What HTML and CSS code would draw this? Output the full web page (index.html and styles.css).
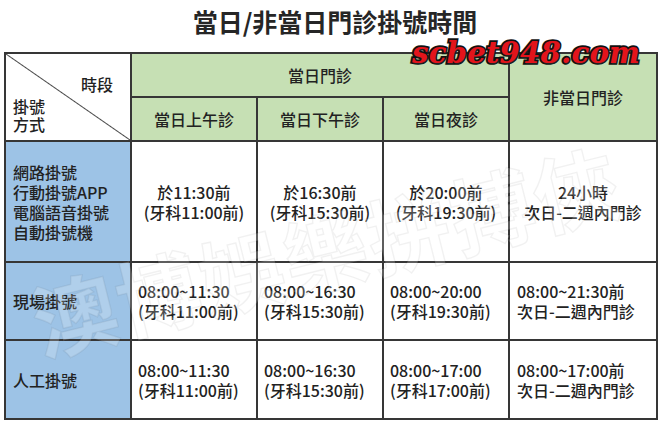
FILE: index.html
```html
<!DOCTYPE html>
<html lang="zh-Hant">
<head>
<meta charset="utf-8">
<title>當日/非當日門診掛號時間</title>
<link rel="stylesheet" href="styles.css">
</head>
<body>
<div class="page">
  <h1 class="title">當日/非當日門診掛號時間</h1>
  <div class="sheet">
    <div class="grid">
      <div class="cell corner">
        <div class="corner-top">時段</div>
        <div class="corner-bottom">掛號<br>方式</div>
      </div>
      <div class="cell head span3">當日門診</div>
      <div class="cell head span-rows">非當日門診</div>
      <div class="cell head">當日上午診</div>
      <div class="cell head">當日下午診</div>
      <div class="cell head">當日夜診</div>

      <div class="cell side">網路掛號<br>行動掛號APP<br>電腦語音掛號<br>自動掛號機</div>
      <div class="cell data center">於11:30前<br>(牙科11:00前)</div>
      <div class="cell data center">於16:30前<br>(牙科15:30前)</div>
      <div class="cell data center">於20:00前<br>(牙科19:30前)</div>
      <div class="cell data center">24小時<br>次日-二週內門診</div>

      <div class="cell side">現場掛號</div>
      <div class="cell data">08:00~11:30<br>(牙科11:00前)</div>
      <div class="cell data">08:00~16:30<br>(牙科15:30前)</div>
      <div class="cell data">08:00~20:00<br>(牙科19:30前)</div>
      <div class="cell data wide">08:00~21:30前<br>次日-二週內門診</div>

      <div class="cell side">人工掛號</div>
      <div class="cell data">08:00~11:30<br>(牙科11:00前)</div>
      <div class="cell data">08:00~16:30<br>(牙科15:30前)</div>
      <div class="cell data">08:00~17:00<br>(牙科17:00前)</div>
      <div class="cell data wide">08:00~17:00前<br>次日-二週內門診</div>
    </div>
    <div class="watermark" aria-hidden="true">澳博娛樂拼搏俠</div>
  </div>
  <div class="logo">scbet948.com</div>
</div>
</body>
</html>
```

FILE: styles.css
```css
html, body {
  margin: 0;
  padding: 0;
  background: #ffffff;
}

.page {
  position: relative;
  width: 663px;
  height: 425px;
  overflow: hidden;
  font-family: "Noto Sans CJK TC", "Noto Sans", sans-serif;
  color: #222222;
}

.title {
  margin: 0;
  padding-left: 7px;
  height: 42px;
  line-height: 42px;
  font-size: 25px;
  font-weight: 700;
  text-align: center;
  color: #262626;
}

.sheet {
  position: relative;
  margin: 10px 4px 0 4px;
  width: 654px;
}

.grid {
  display: grid;
  grid-template-columns: 124px 124px 124px 124px 146px;
  grid-template-rows: 42px 42px 119px 76px 77px;
  gap: 2px;
  padding: 2px;
  background: #363636;
}

.cell {
  background: #ffffff;
  font-size: 16px;
  font-weight: 500;
  line-height: 20px;
  display: flex;
  align-items: center;
}

.head {
  background: #c6e0b4;
  justify-content: center;
}

.span3 {
  grid-column: span 3;
}

.span-rows {
  grid-column: 5;
  grid-row: 1 / span 2;
}

.corner {
  grid-column: 1;
  grid-row: 1 / span 2;
  flex-direction: column;
  align-items: stretch;
  background: linear-gradient(to top right, #ffffff calc(50% - 1px), #4a4a4a 50%, #ffffff calc(50% + 1px));
  line-height: 18px;
}

.corner-top {
  padding-top: 21px;
  padding-right: 17px;
  text-align: right;
}

.corner-bottom {
  padding-top: 4px;
  padding-left: 7px;
}

.side {
  background: #9dc3e6;
  padding-left: 7px;
}

.data {
  padding-left: 6px;
}

.data.wide {
  padding-left: 7px;
}

.data.center {
  padding-left: 0;
  justify-content: center;
  text-align: center;
}

.watermark {
  position: absolute;
  left: 20px;
  top: 150px;
  width: 620px;
  font-size: 84px;
  line-height: 90px;
  font-weight: 700;
  white-space: nowrap;
  color: rgba(255, 255, 255, 0.2);
  -webkit-text-stroke: 1.5px rgba(0, 0, 0, 0.055);
  transform: rotate(-14deg);
  transform-origin: center;
  pointer-events: none;
  letter-spacing: 2px;
}

.logo {
  position: absolute;
  left: 412px;
  top: 38px;
  font-family: "DejaVu Serif", serif;
  font-weight: 700;
  font-style: italic;
  font-size: 29px;
  line-height: 30px;
  color: #e3141b;
  -webkit-text-stroke: 3.5px #111111;
  paint-order: stroke fill;
  letter-spacing: 0.3px;
  text-shadow: 1px 1px 0 #222222;
}
```
